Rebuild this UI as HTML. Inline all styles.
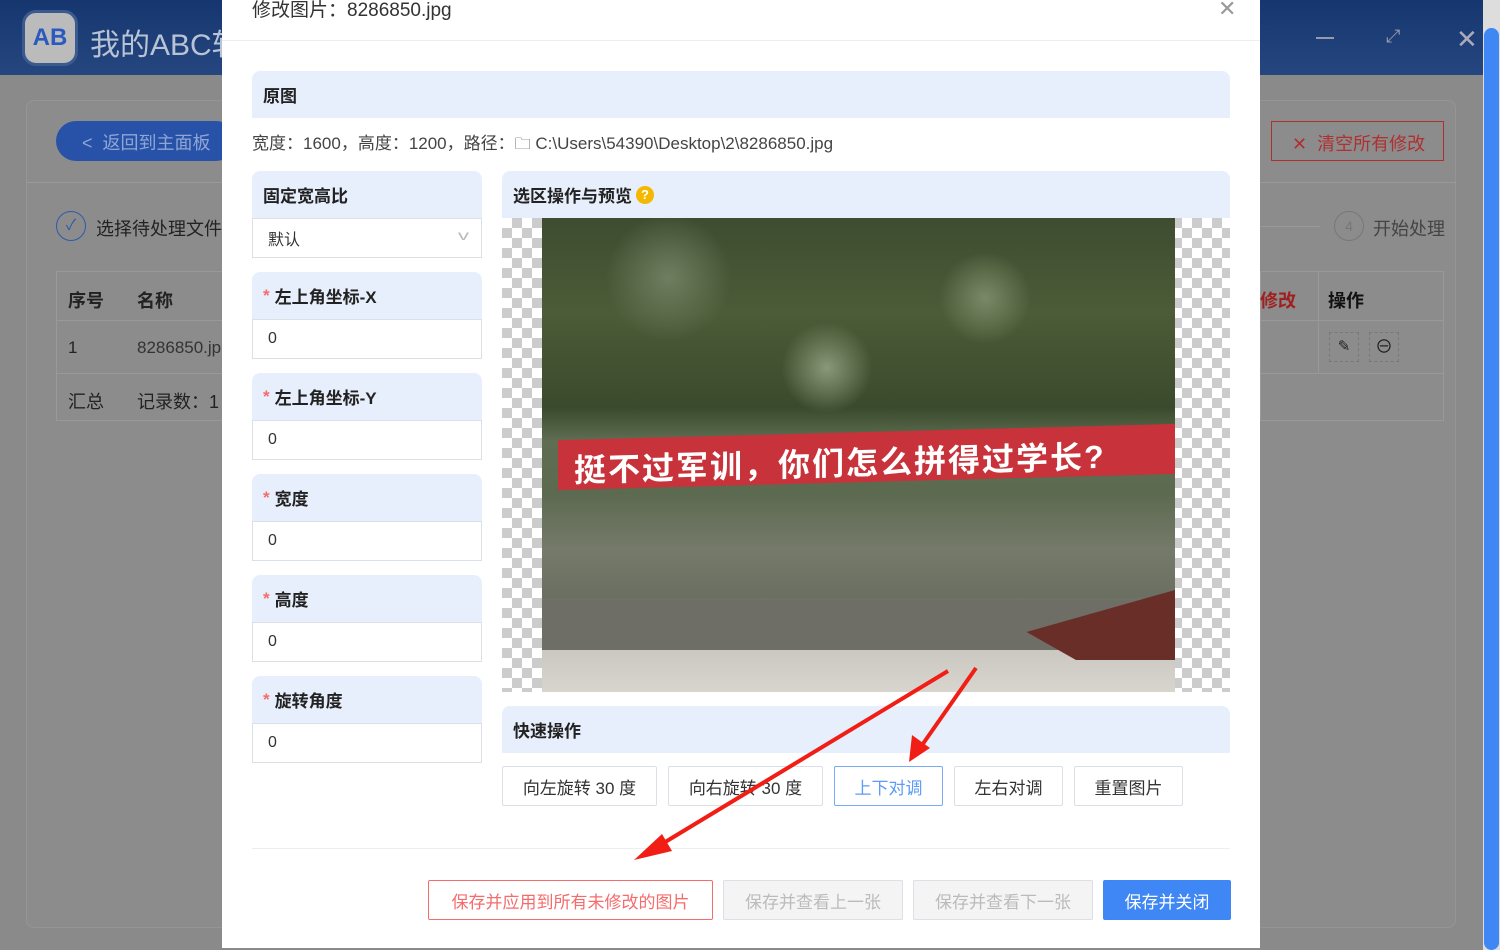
<!DOCTYPE html>
<html><head><meta charset="utf-8"><style>
*{box-sizing:border-box;margin:0;padding:0}
body{width:1500px;height:950px;overflow:hidden;position:relative;background:#8a8a8a;font-family:"Liberation Sans","Noto Sans CJK SC",sans-serif;color:#333}
.a{position:absolute}
.hdr{background:#e8effc;border-radius:8px 8px 0 0;font-weight:bold;font-size:17px;color:#222;padding-left:11px;display:flex;align-items:center}
.inp{background:#fff;border:1px solid #dcdfe6;font-size:16px;padding-left:15px;display:flex;align-items:center;color:#333}
.st{color:#f56c6c;margin-right:5px}
.btn{position:absolute;border:1px solid #dcdfe6;background:#fff;font-size:17px;display:flex;align-items:center;justify-content:center;color:#333;border-radius:2px}
.chk{background-color:#fff;background-image:linear-gradient(45deg,#ccc 25%,transparent 25%,transparent 75%,#ccc 75%),linear-gradient(45deg,#ccc 25%,transparent 25%,transparent 75%,#ccc 75%);background-size:20px 20px;background-position:0 0,10px 10px}
</style></head><body>
<div class="a" style="left:0;top:0;width:1500px;height:75px;background:linear-gradient(#163670,#25467f)"></div>
<div class="a" style="left:22px;top:10px;width:56px;height:56px;border-radius:14px;background:#bbb;border:3px solid #3a5a90;display:flex;align-items:center;justify-content:center;font-weight:bold;font-size:24px;color:#2a5ac0">AB</div>
<div class="a" style="left:90px;top:20px;font-size:30px;color:#b9c3d6">我的ABC软</div>
<div class="a" style="left:1316px;top:37px;width:18px;height:2px;background:#99a"></div>
<div class="a" style="left:1386px;top:26px;color:#99a;font-size:18px">⤢</div>
<div class="a" style="left:1456px;top:24px;color:#aab;font-size:26px">✕</div>
<div class="a" style="left:1483px;top:0;width:17px;height:950px;background:#ddd"></div>
<div class="a" style="left:1484px;top:28px;width:15px;height:922px;background:#3f87f5;border-radius:8px"></div>
<div class="a" style="left:26px;top:100px;width:1430px;height:828px;background:#8c8c8c;border:1px solid #959595;border-radius:8px"></div>
<div class="a" style="left:26px;top:182px;width:1430px;height:1px;background:#999"></div>
<div class="a" style="left:56px;top:121px;width:180px;height:40px;border-radius:20px;background:#2752a8;color:#8fa6d4;font-size:18px;padding:8px 0 0 26px">&lt;&nbsp; 返回到主面板</div>
<div class="a" style="left:56px;top:211px;width:30px;height:30px;border-radius:50%;border:1.5px solid #2c5aaa;color:#2c5aaa;text-align:center;line-height:27px;font-size:15px">✓</div>
<div class="a" style="left:96px;top:215px;font-size:18px;color:#222">选择待处理文件</div>
<div class="a" style="left:56px;top:271px;width:200px;height:150px;border:1px solid #999"></div>
<div class="a" style="left:56px;top:320px;width:200px;height:1px;background:#999"></div>
<div class="a" style="left:56px;top:373px;width:200px;height:1px;background:#999"></div>
<div class="a" style="left:68px;top:287px;font-size:18px;font-weight:bold;color:#222">序号</div>
<div class="a" style="left:137px;top:287px;font-size:18px;font-weight:bold;color:#222">名称</div>
<div class="a" style="left:68px;top:338px;font-size:17px;color:#222">1</div>
<div class="a" style="left:137px;top:338px;font-size:17px;color:#333">8286850.jp</div>
<div class="a" style="left:68px;top:388px;font-size:18px;color:#222">汇总</div>
<div class="a" style="left:137px;top:388px;font-size:18px;color:#222">记录数：1</div>
<div class="a" style="left:1271px;top:121px;width:173px;height:40px;border:1px solid #b03030;color:#b03030;font-size:18px;padding:8px 0 0 20px">✕&nbsp; 清空所有修改</div>
<div class="a" style="left:1260px;top:226px;width:60px;height:1px;background:#999"></div>
<div class="a" style="left:1334px;top:211px;width:30px;height:30px;border-radius:50%;border:1px solid #777;color:#777;text-align:center;line-height:28px;font-size:14px">4</div>
<div class="a" style="left:1373px;top:215px;font-size:18px;color:#444">开始处理</div>
<div class="a" style="left:1260px;top:271px;width:184px;height:150px;border:1px solid #999"></div>
<div class="a" style="left:1260px;top:320px;width:184px;height:1px;background:#999"></div>
<div class="a" style="left:1260px;top:373px;width:184px;height:1px;background:#999"></div>
<div class="a" style="left:1318px;top:271px;width:1px;height:103px;background:#999"></div>
<div class="a" style="left:1260px;top:287px;font-size:18px;font-weight:bold;color:#a02020">修改</div>
<div class="a" style="left:1328px;top:287px;font-size:18px;font-weight:bold;color:#111">操作</div>
<div class="a" style="left:1329px;top:332px;width:30px;height:30px;border:1px dashed #777;text-align:center;line-height:28px;font-size:15px;color:#222">✎</div>
<div class="a" style="left:1369px;top:332px;width:30px;height:30px;border:1px dashed #777;text-align:center;line-height:28px;font-size:18px;color:#222">⊖</div>

<div class="a" style="left:222px;top:0;width:1038px;height:948px;background:#fff"></div>
<div class="a" style="left:252px;top:-5px;font-size:19px;color:#333">修改图片：8286850.jpg</div>
<div class="a" style="left:1218px;top:-4px;font-size:22px;color:#999">✕</div>
<div class="a" style="left:222px;top:40px;width:1038px;height:1px;background:#eee"></div>
<div class="a hdr" style="left:252px;top:71px;width:978px;height:47px">原图</div>
<div class="a" style="left:252px;top:129px;font-size:17px;color:#444">宽度：1600，高度：1200，路径：<span style="font-size:16px">🗀</span> C:\Users\54390\Desktop\2\8286850.jpg</div>

<div class="a hdr" style="left:252px;top:171px;width:230px;height:47px">固定宽高比</div>
<div class="a inp" style="left:252px;top:218px;width:230px;height:40px">默认<span style="position:absolute;right:14px;top:8px;color:#bbb;font-size:14px;transform:scaleX(1.6)">v</span></div>
<div class="a hdr" style="left:252px;top:272px;width:230px;height:47px"><span class="st">*</span>左上角坐标-X</div>
<div class="a inp" style="left:252px;top:319px;width:230px;height:40px">0</div>
<div class="a hdr" style="left:252px;top:373px;width:230px;height:47px"><span class="st">*</span>左上角坐标-Y</div>
<div class="a inp" style="left:252px;top:420px;width:230px;height:40px">0</div>
<div class="a hdr" style="left:252px;top:474px;width:230px;height:47px"><span class="st">*</span>宽度</div>
<div class="a inp" style="left:252px;top:521px;width:230px;height:40px">0</div>
<div class="a hdr" style="left:252px;top:575px;width:230px;height:47px"><span class="st">*</span>高度</div>
<div class="a inp" style="left:252px;top:622px;width:230px;height:40px">0</div>
<div class="a hdr" style="left:252px;top:676px;width:230px;height:47px"><span class="st">*</span>旋转角度</div>
<div class="a inp" style="left:252px;top:723px;width:230px;height:40px">0</div>

<div class="a hdr" style="left:502px;top:171px;width:728px;height:47px">选区操作与预览 <span style="display:inline-block;width:18px;height:18px;border-radius:50%;background:#f5b800;color:#fff;font-size:13px;text-align:center;line-height:18px;margin-left:4px">?</span></div>
<div class="a chk" style="left:502px;top:218px;width:728px;height:474px"></div>
<div class="a" style="left:542px;top:218px;width:633px;height:474px;background:linear-gradient(#3e4c30 0%,#4c5c38 20%,#3a4a2c 40%,#5f6e52 47%,#5c6a50 58%,#757a6a 70%,#6a6f62 80%,#c9c6c0 90%,#d8d4ce 100%)"></div>
<div class="a" style="left:542px;top:218px;width:633px;height:200px;background:radial-gradient(circle at 20% 30%,#6f7e60 0,transparent 12%),radial-gradient(circle at 70% 40%,#7a8a68 0,transparent 10%),radial-gradient(circle at 45% 75%,#889878 0,transparent 12%)"></div>
<div class="a" style="left:558px;top:432px;width:617px;height:50px;background:#c8323a;transform:skewY(-1.5deg);color:#fff;font-weight:bold;font-size:32px;padding:6px 0 0 16px;letter-spacing:2px;white-space:nowrap;overflow:hidden">挺不过军训，你们怎么拼得过学长?</div>
<div class="a" style="left:542px;top:600px;width:633px;height:50px;background:#6e6d66"></div>
<div class="a" style="left:1010px;top:590px;width:165px;height:70px;background:#6a2e28;clip-path:polygon(10% 60%,100% 0,100% 100%,40% 100%)"></div>

<div class="a hdr" style="left:502px;top:706px;width:728px;height:47px">快速操作</div>
<div class="btn" style="left:502px;top:766px;width:155px;height:40px">向左旋转 30 度</div>
<div class="btn" style="left:668px;top:766px;width:155px;height:40px">向右旋转 30 度</div>
<div class="btn" style="left:834px;top:766px;width:109px;height:40px;border-color:#79aaf5;color:#5d9bf5">上下对调</div>
<div class="btn" style="left:954px;top:766px;width:109px;height:40px">左右对调</div>
<div class="btn" style="left:1074px;top:766px;width:109px;height:40px">重置图片</div>
<div class="a" style="left:252px;top:848px;width:978px;height:1px;background:#eee"></div>
<div class="btn" style="left:428px;top:880px;width:285px;height:40px;border-color:#f56c6c;color:#f56c6c">保存并应用到所有未修改的图片</div>
<div class="btn" style="left:723px;top:880px;width:180px;height:40px;background:#f4f4f5;color:#bbb">保存并查看上一张</div>
<div class="btn" style="left:913px;top:880px;width:180px;height:40px;background:#f4f4f5;color:#bbb">保存并查看下一张</div>
<div class="btn" style="left:1103px;top:880px;width:128px;height:40px;background:#3f87f5;border-color:#3f87f5;color:#fff">保存并关闭</div>

<svg class="a" style="left:0;top:0" width="1500" height="950">
<g stroke="#f01e14" stroke-width="4" fill="#f01e14">
<line x1="948" y1="671" x2="652" y2="850"/>
<polygon points="634,860 662,834 672,851" stroke="none"/>
<line x1="976" y1="668" x2="920" y2="748"/>
<polygon points="909,762 912,735 930,748" stroke="none"/>
</g></svg>
</body></html>
